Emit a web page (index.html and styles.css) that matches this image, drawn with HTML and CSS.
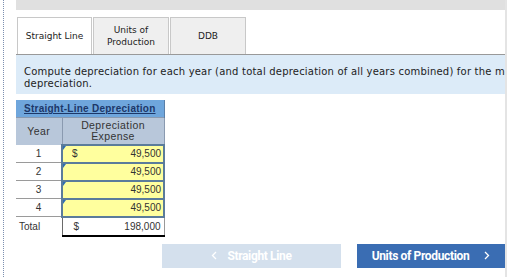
FILE: index.html
```html
<!DOCTYPE html>
<html>
<head>
<meta charset="utf-8">
<link rel="stylesheet" href="styles.css">
</head>
<body>
<div class="frame">
  <div class="inner">
    <div class="topbar"></div>
    <div class="tabs">
      <div class="tab active">Straight Line</div>
      <div class="tab">Units of<br>Production</div>
      <div class="tab">DDB</div>
    </div>
    <div class="instructions">Compute depreciation for each year (and total depreciation of all years combined) for the method of<br>depreciation.</div>
    <table class="dep">
      <colgroup><col class="c1"><col class="c2"></colgroup>
      <tr><th colspan="2" class="title"><span>Straight-Line Depreciation</span></th></tr>
      <tr class="colhead"><th class="year">Year</th><th class="exp">Depreciation<br>Expense</th></tr>
      <tr><td class="yr">1</td><td class="inp"><span class="cur">$</span><span class="num">49,500</span></td></tr>
      <tr><td class="yr">2</td><td class="inp"><span class="num">49,500</span></td></tr>
      <tr><td class="yr">3</td><td class="inp"><span class="num">49,500</span></td></tr>
      <tr><td class="yr">4</td><td class="inp"><span class="num">49,500</span></td></tr>
      <tr class="total"><td class="yr tl">Total</td><td class="tot"><span class="cur">$</span><span class="num">198,000</span></td></tr>
    </table>
    <div class="nav">
      <div class="btn prev">
        <svg width="6" height="9" viewBox="0 0 6 9"><polyline points="5,1 1.5,4.5 5,8" fill="none" stroke="#fff" stroke-width="1.3"/></svg>
        <span>Straight Line</span>
      </div>
      <div class="btn next">
        <span>Units of Production</span>
        <svg width="6" height="9" viewBox="0 0 6 9"><polyline points="1,1 4.5,4.5 1,8" fill="none" stroke="#fff" stroke-width="1.3"/></svg>
      </div>
    </div>
  </div>
</div>
</body>
</html>
```
FILE: styles.css
```css
html, body { margin: 0; padding: 0; background: #fff; }
body { width: 507px; height: 277px; overflow: hidden; }
.frame { padding-left: 3px; height: 277px; }
.inner {
  border-left: 1px dotted #7b8fb0;
  padding-left: 12px;
  width: 489px;
  height: 277px;
  border-right: 2px solid #e4e4e4;
  overflow: hidden;
}
.topbar { height: 10px; background: #e0e0e0; }
.tabs {
  display: flex;
  margin-top: 7px;
  padding-left: 1px;
  border-bottom: 1px solid #999;
  height: 37px;
}
.tab {
  box-sizing: border-box;
  width: 76px;
  height: 37px;
  margin-left: 1px;
  border: 1px solid #c8c8c8;
  border-bottom: none;
  background: #efefef;
  font-family: "DejaVu Sans", Verdana, sans-serif;
  font-size: 9px;
  line-height: 12px;
  color: #222;
  display: flex;
  align-items: center;
  justify-content: center;
  text-align: center;
}
.tab.active { background: #fff; width: 75px; margin-left: 0; }
.instructions {
  background: #dcebf8;
  height: 39px;
  box-sizing: border-box;
  padding: 11px 8px 0 8px;
  font-family: "DejaVu Sans", Verdana, sans-serif;
  font-size: 10px;
  letter-spacing: 0.2px;
  line-height: 12px;
  color: #222;
  white-space: nowrap;
  overflow: hidden;
}
.dep {
  margin-top: 6px;
  border-collapse: collapse;
  table-layout: fixed;
  width: 148px;
  font-family: "Liberation Sans", Arial, sans-serif;
  font-size: 10px;
  color: #333;
}
.c1 { width: 46px; }
.c2 { width: 102px; }
.dep th, .dep td { padding: 0; }
.title {
  background: #6fa6dc;
  height: 17px;
  text-align: center;
  border-right: 1px solid #5a7fa8;
}
.title span {
  font-weight: bold;
  text-decoration: underline;
  color: #1c3768;
  letter-spacing: 0.25px;
}
.colhead th {
  background: #b8c7da;
  height: 26px;
  font-weight: normal;
  color: #333;
  font-size: 10.5px;
  line-height: 11px;
  letter-spacing: 0.4px;
  border-top: 1px solid #8a9ab0;
}
.colhead .year { border-right: 1px solid #8a9ab0; }
.colhead .exp { border-right: 1px solid #8a9ab0; }
.yr {
  height: 17px;
  text-align: center;
  border-bottom: 1px solid #9a9a9a;
  border-right: 1px solid #6a6a6a;
  color: #333;
}
.dep td.tl { text-align: left; padding-left: 3px; border-bottom: none; }
.dep td.inp {
  position: relative;
  background: #ffff9e;
  border: 2px solid #5b7c9b;
  height: 14px;
  line-height: 14px;
  padding: 0 2px 0 9px;
}
.inp::before {
  content: "";
  position: absolute;
  left: 0;
  top: 0;
  border-top: 4px solid #2f6db0;
  border-right: 3px solid transparent;
}
.cur { float: left; }
.num { float: right; }
.dep td.tot {
  height: 17px;
  line-height: 17px;
  padding: 0 3px 0 11px;
  border-bottom: 2px solid #000;
  border-right: 1px solid #999;
  color: #333;
}
.nav {
  display: flex;
  justify-content: flex-end;
  gap: 16px;
  margin-top: 7px;
}
.btn {
  height: 24px;
  display: flex;
  align-items: center;
  justify-content: center;
  gap: 10px;
  font-family: Roboto, "Liberation Sans", sans-serif;
  font-weight: bold;
  font-size: 12px;
  letter-spacing: -0.35px;
  color: #fff;
}
.btn.prev { width: 179px; background: #d4e0ed; }
.btn.next { width: 148px; background: #3a6db3; gap: 15px; }
```
